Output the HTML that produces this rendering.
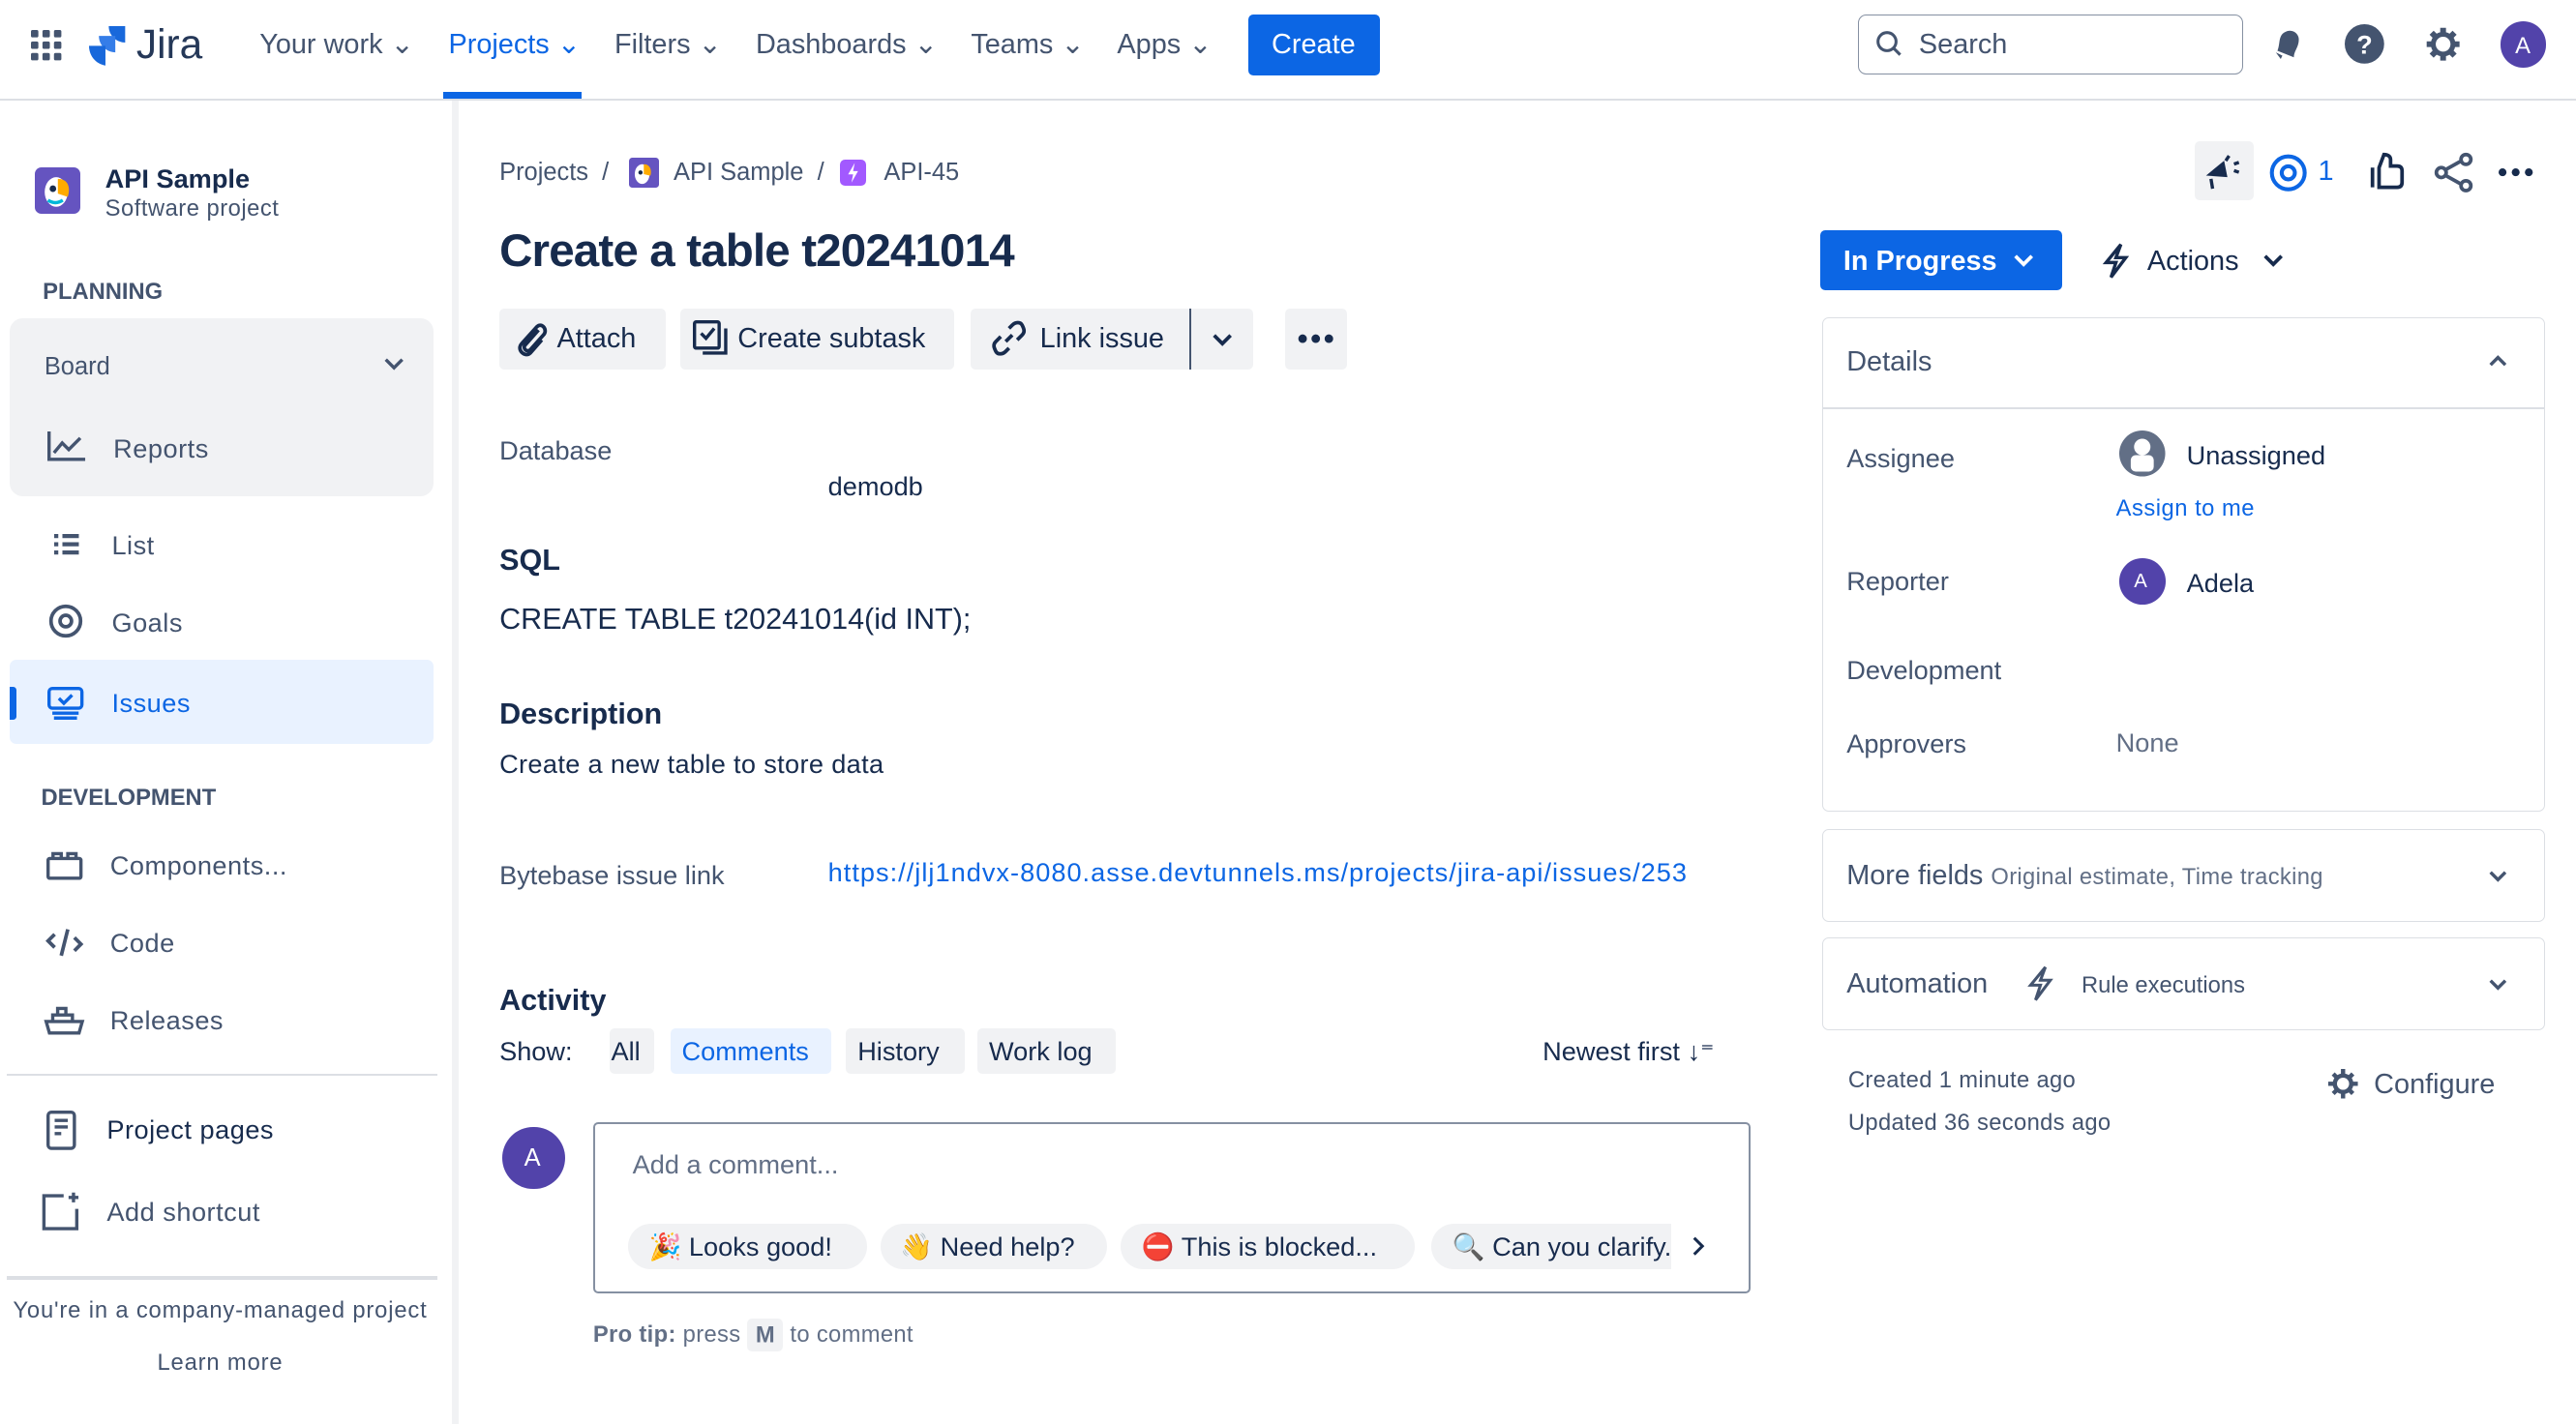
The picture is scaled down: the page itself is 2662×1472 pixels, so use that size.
<!DOCTYPE html>
<html><head><meta charset="utf-8">
<style>
html,body{margin:0;padding:0;background:#fff;overflow:hidden}
body{width:2662px;height:1472px}
#s{position:absolute;left:0;top:0;width:1568px;height:867px;zoom:1.69770;font-family:"Liberation Sans",sans-serif;color:#172b4d}
.t{position:absolute;white-space:nowrap;line-height:1}
.g{color:#44546f}
.b{font-weight:bold}
.box{position:absolute}
svg{position:absolute;overflow:visible}
.btn{position:absolute;background:#f1f2f4;border-radius:3px}
.pill{position:absolute;background:#f1f2f4;border-radius:14px}
</style></head><body><div id="s">
<!-- top nav -->
<div class="box" style="left:0;top:60px;width:1568px;height:1px;background:#dcdfe4"></div>
<svg style="left:19px;top:18px" width="19" height="19" fill="#44546f"><rect x="0" y="0" width="4.5" height="4.5" rx="1"/><rect x="7" y="0" width="4.5" height="4.5" rx="1"/><rect x="14" y="0" width="4.5" height="4.5" rx="1"/><rect x="0" y="7" width="4.5" height="4.5" rx="1"/><rect x="7" y="7" width="4.5" height="4.5" rx="1"/><rect x="14" y="7" width="4.5" height="4.5" rx="1"/><rect x="0" y="14" width="4.5" height="4.5" rx="1"/><rect x="7" y="14" width="4.5" height="4.5" rx="1"/><rect x="14" y="14" width="4.5" height="4.5" rx="1"/></svg>
<svg style="left:54px;top:16px" width="24" height="24"><path d="M12 0h10v10c-5 0-10-4-10-10z" fill="#1868db"/><path d="M6 6h10v10C11 16 6 12 6 6z" fill="#357de8"/><path d="M0 12h10v12C4 23 0 18 0 12z" fill="#1868db"/></svg>
<div class="t" style="left:83px;top:15px;font-size:25px;color:#253858">Jira</div>
<div class="t g" style="left:158px;top:19px;font-size:17px">Your work ⌄</div>
<div class="t" style="left:273px;top:19px;font-size:17px;color:#0c66e4">Projects ⌄</div>
<div class="box" style="left:270px;top:56px;width:84px;height:4px;background:#0c66e4"></div>
<div class="t g" style="left:374px;top:19px;font-size:17px">Filters ⌄</div>
<div class="t g" style="left:460px;top:19px;font-size:17px">Dashboards ⌄</div>
<div class="t g" style="left:591px;top:19px;font-size:17px">Teams ⌄</div>
<div class="t g" style="left:680px;top:19px;font-size:17px">Apps ⌄</div>
<div class="box" style="left:760px;top:9px;width:80px;height:37px;background:#0c66e4;border-radius:3px"></div>
<div class="t" style="left:774px;top:19px;font-size:17px;color:#fff">Create</div>
<div class="box" style="left:1131px;top:9px;width:233px;height:35px;border:1px solid #8590a2;border-radius:5px"></div>
<svg style="left:1142px;top:19px" width="16" height="16" fill="none" stroke="#44546f" stroke-width="1.8"><circle cx="6.5" cy="6.5" r="5.5"/><path d="M10.5 10.5l4 4"/></svg>
<div class="t g" style="left:1168px;top:19px;font-size:17px">Search</div>
<svg style="left:1381px;top:16px" width="22" height="22" fill="#44546f"><path d="M5 15C7 10 5 5 11 3c4-1 7 2 7 5 0 5-3 7-3 11z"/><path d="M4 16l3 4 1-2z"/></svg>
<svg style="left:1427px;top:15px" width="24" height="24"><circle cx="12" cy="12" r="12" fill="#44546f"/><text x="12" y="18" text-anchor="middle" font-size="16" font-weight="bold" fill="#fff" font-family="Liberation Sans">?</text></svg>
<svg style="left:1476px;top:16px" width="22" height="22" fill="none" stroke="#44546f" stroke-width="3"><circle cx="11" cy="11" r="6"/><path d="M11 1v4M11 17v4M1 11h4M17 11h4M4 4l3 3M15 15l3 3M4 18l3-3M15 7l3-3" stroke-width="3.5"/></svg>
<div class="box" style="left:1522px;top:13px;width:28px;height:28px;border-radius:50%;background:#5243aa"></div>
<div class="t" style="left:1531px;top:21px;font-size:14px;color:#fff">A</div>

<!-- sidebar -->
<div class="box" style="left:275px;top:61px;width:4px;height:806px;background:#f1f2f4"></div>
<div class="box" style="left:21px;top:102px;width:28px;height:28px;border-radius:4px;background:#6554c0"></div>
<svg style="left:21px;top:102px" width="28" height="28"><ellipse cx="13" cy="15" rx="7" ry="9" fill="#fff"/><path d="M14 7c6 0 8 5 6 11l-6-2z" fill="#ffab00"/><circle cx="11" cy="13" r="2" fill="#172b4d"/><path d="M8 20c3 2 6 2 9 0" stroke="#00b8d9" stroke-width="2" fill="none"/></svg>
<div class="t b" style="left:64px;top:101px;font-size:16px">API Sample</div>
<div class="t g" style="left:64px;top:120px;font-size:14px;letter-spacing:0.3px">Software project</div>
<div class="t b g" style="left:26px;top:171px;font-size:14px">PLANNING</div>
<div class="box" style="left:6px;top:194px;width:258px;height:108px;background:#f1f2f4;border-radius:8px"></div>
<div class="t g" style="left:27px;top:216px;font-size:15px">Board</div>
<svg style="left:234px;top:218px" width="12" height="8" fill="none" stroke="#44546f" stroke-width="2"><path d="M1 1l5 5 5-5"/></svg>
<svg style="left:29px;top:263px" width="24" height="18" fill="none" stroke="#44546f" stroke-width="2"><path d="M1 0v17h22"/><path d="M4 13l5-6 4 4 7-7"/></svg>
<div class="t g" style="left:69px;top:265px;font-size:16px;letter-spacing:0.3px">Reports</div>
<svg style="left:33px;top:325px" width="15" height="12" fill="#44546f"><rect x="0" y="0" width="2.5" height="2.5"/><rect x="5" y="0" width="10" height="2.5"/><rect x="0" y="5" width="2.5" height="2.5"/><rect x="5" y="5" width="10" height="2.5"/><rect x="0" y="10" width="2.5" height="2.5"/><rect x="5" y="10" width="10" height="2.5"/></svg>
<div class="t g" style="left:68px;top:324px;font-size:16px;letter-spacing:0.3px">List</div>
<svg style="left:30px;top:368px" width="20" height="20" fill="none" stroke="#44546f" stroke-width="2.2"><circle cx="10" cy="10" r="9"/><circle cx="10" cy="10" r="3.5"/></svg>
<div class="t g" style="left:68px;top:371px;font-size:16px;letter-spacing:0.3px">Goals</div>
<div class="box" style="left:6px;top:402px;width:258px;height:51px;background:#e9f2ff;border-radius:4px"></div>
<div class="box" style="left:6px;top:418px;width:4px;height:20px;background:#0c66e4;border-radius:0 2px 2px 0"></div>
<svg style="left:29px;top:418px" width="22" height="20" fill="none" stroke="#0c66e4" stroke-width="2"><rect x="1" y="1" width="20" height="12" rx="2"/><path d="M7 7l3 3 5-5M3 16h16M4 19h14"/></svg>
<div class="t" style="left:68px;top:420px;font-size:16px;color:#0c66e4;letter-spacing:0.3px">Issues</div>
<div class="t b g" style="left:25px;top:479px;font-size:14px">DEVELOPMENT</div>
<svg style="left:28px;top:518px" width="22" height="18" fill="none" stroke="#44546f" stroke-width="2"><rect x="1" y="5" width="20" height="12" rx="1"/><path d="M4 5V2h5v3M13 5V2h5v3"/></svg>
<div class="t g" style="left:67px;top:519px;font-size:16px;letter-spacing:0.3px">Components...</div>
<svg style="left:28px;top:565px" width="22" height="18" fill="none" stroke="#44546f" stroke-width="2.2"><path d="M5 4L1 8l4 4M17 6l4 4-4 4M13 1L9 17"/></svg>
<div class="t g" style="left:67px;top:566px;font-size:16px;letter-spacing:0.3px">Code</div>
<svg style="left:27px;top:612px" width="24" height="18" fill="none" stroke="#44546f" stroke-width="2"><path d="M1 10h22l-2 7H3zM5 10V6h12v4M8 6V2h5v4"/></svg>
<div class="t g" style="left:67px;top:613px;font-size:16px;letter-spacing:0.3px">Releases</div>
<div class="box" style="left:4px;top:654px;width:262px;height:1px;background:#dcdfe4"></div>
<svg style="left:28px;top:676px" width="18" height="24" fill="none" stroke="#44546f" stroke-width="2"><rect x="1" y="1" width="16" height="22" rx="2"/><path d="M5 6h8M5 10h8M5 14h4"/></svg>
<div class="t" style="left:65px;top:680px;font-size:16px;letter-spacing:0.3px">Project pages</div>
<svg style="left:25px;top:725px" width="24" height="24" fill="none" stroke="#44546f" stroke-width="2"><path d="M14 3H2v20h20V11"/><path d="M20 1v6M17 4h6"/></svg>
<div class="t g" style="left:65px;top:730px;font-size:16px;letter-spacing:0.3px">Add shortcut</div>
<div class="box" style="left:4px;top:777px;width:262px;height:2px;background:#dcdfe4"></div>
<div class="t g" style="left:0;width:268px;text-align:center;top:791px;font-size:14px;letter-spacing:0.5px">You're in a company-managed project</div>
<div class="t g" style="left:0;width:268px;text-align:center;top:823px;font-size:14px;letter-spacing:0.5px">Learn more</div>

<!-- main -->
<div class="t g" style="left:304px;top:98px;font-size:15px">Projects &nbsp;/</div>
<div class="box" style="left:383px;top:96px;width:18px;height:18px;border-radius:2px;background:#6554c0"></div>
<svg style="left:383px;top:96px" width="18" height="18"><ellipse cx="8" cy="10" rx="4.5" ry="6" fill="#fff"/><path d="M9 4c4 0 5 4 4 7l-4-1z" fill="#ffab00"/><circle cx="7" cy="9" r="1.3" fill="#172b4d"/></svg>
<div class="t g" style="left:410px;top:98px;font-size:15px">API Sample &nbsp;/</div>
<div class="box" style="left:511px;top:97px;width:16px;height:16px;border-radius:3px;background:#a259ff"></div>
<svg style="left:511px;top:97px" width="16" height="16"><path d="M9 2L5 9h3l-1 5 4-7H8z" fill="#fff"/></svg>
<div class="t g" style="left:538px;top:98px;font-size:15px">API-45</div>
<div class="t" style="left:304px;top:139px;font-size:28px;font-weight:bold;letter-spacing:-0.5px">Create a table t20241014</div>

<div class="btn" style="left:304px;top:188px;width:101px;height:37px"></div>
<svg style="left:313px;top:195px" width="20" height="22" fill="none" stroke="#172b4d" stroke-width="2.2"><path d="M15 6l-8 9c-2 2 1 5 3 3l8-9c3-3-1-8-4-5l-9 10c-4 4 2 9 5 6l7-8"/></svg>
<div class="t" style="left:339px;top:198px;font-size:17px">Attach</div>
<div class="btn" style="left:414px;top:188px;width:167px;height:37px"></div>
<svg style="left:422px;top:195px" width="22" height="22" fill="none" stroke="#172b4d" stroke-width="2"><rect x="1" y="1" width="15" height="16" rx="1"/><path d="M5 8l3 3 5-6M20 5v15H6"/></svg>
<div class="t" style="left:449px;top:198px;font-size:17px">Create subtask</div>
<div class="btn" style="left:591px;top:188px;width:172px;height:37px"></div>
<div class="box" style="left:724px;top:188px;width:1px;height:37px;background:#44546f"></div>
<svg style="left:603px;top:195px" width="22" height="22" fill="none" stroke="#172b4d" stroke-width="2.2"><path d="M9 13l4-4M11 5l2-2c2-2 5-2 6 0s2 4 0 6l-3 3M11 17l-2 2c-2 2-5 2-6 0s-2-4 0-6l3-3"/></svg>
<div class="t" style="left:633px;top:198px;font-size:17px">Link issue</div>
<svg style="left:738px;top:203px" width="12" height="8" fill="none" stroke="#172b4d" stroke-width="2.2"><path d="M1 1l5 5 5-5"/></svg>
<div class="btn" style="left:782px;top:188px;width:38px;height:37px"></div>
<svg style="left:790px;top:203px" width="22" height="6" fill="#172b4d"><circle cx="3" cy="3" r="2.6"/><circle cx="11" cy="3" r="2.6"/><circle cx="19" cy="3" r="2.6"/></svg>

<div class="t g" style="left:304px;top:266px;font-size:16px">Database</div>
<div class="t" style="left:504px;top:288px;font-size:16px">demodb</div>
<div class="t b" style="left:304px;top:332px;font-size:18px">SQL</div>
<div class="t" style="left:304px;top:368px;font-size:18px">CREATE TABLE t20241014(id INT);</div>
<div class="t b" style="left:304px;top:426px;font-size:18px">Description</div>
<div class="t" style="left:304px;top:457px;font-size:16px;letter-spacing:0.2px">Create a new table to store data</div>
<div class="t g" style="left:304px;top:525px;font-size:16px">Bytebase issue link</div>
<div class="t" style="left:504px;top:523px;font-size:16px;color:#0c66e4;letter-spacing:0.6px">https://jlj1ndvx-8080.asse.devtunnels.ms/projects/jira-api/issues/253</div>

<div class="t b" style="left:304px;top:600px;font-size:18px">Activity</div>
<div class="t" style="left:304px;top:632px;font-size:16px">Show:</div>
<div class="btn" style="left:371px;top:626px;width:27px;height:28px"></div>
<div class="t" style="left:372px;top:632px;font-size:16px">All</div>
<div class="btn" style="left:408px;top:626px;width:98px;height:28px;background:#e9f2ff"></div>
<div class="t" style="left:415px;top:632px;font-size:16px;color:#0c66e4">Comments</div>
<div class="btn" style="left:515px;top:626px;width:72px;height:28px"></div>
<div class="t" style="left:522px;top:632px;font-size:16px">History</div>
<div class="btn" style="left:595px;top:626px;width:84px;height:28px"></div>
<div class="t" style="left:602px;top:632px;font-size:16px">Work log</div>
<div class="t" style="left:939px;top:632px;font-size:16px">Newest first ↓⁼</div>

<div class="box" style="left:306px;top:686px;width:38px;height:38px;border-radius:50%;background:#5243aa"></div>
<div class="t" style="left:319px;top:698px;font-size:15px;color:#fff">A</div>
<div class="box" style="left:361px;top:683px;width:702px;height:102px;border:1.5px solid #8590a2;border-radius:3px"></div>
<div class="t" style="left:385px;top:701px;font-size:16px;color:#626f86">Add a comment...</div>
<div class="pill" style="left:382px;top:745px;width:146px;height:28px"></div>
<div class="t" style="left:395px;top:751px;font-size:16px">🎉 Looks good!</div>
<div class="pill" style="left:536px;top:745px;width:138px;height:28px"></div>
<div class="t" style="left:548px;top:751px;font-size:16px">👋 Need help?</div>
<div class="pill" style="left:682px;top:745px;width:179px;height:28px"></div>
<div class="t" style="left:695px;top:751px;font-size:16px">⛔ This is blocked...</div>
<div style="position:absolute;left:871px;top:745px;width:146px;height:28px;overflow:hidden"><div class="pill" style="left:0;top:0;width:170px;height:28px"></div><div class="t" style="left:13px;top:6px;font-size:16px">🔍 Can you clarify...</div></div>
<svg style="left:1030px;top:753px" width="8" height="12" fill="none" stroke="#172b4d" stroke-width="1.8"><path d="M1 1l5 5-5 5"/></svg>
<div class="t" style="left:361px;top:806px;font-size:14px;color:#626f86;letter-spacing:0.2px"><b>Pro tip:</b> press <span style="background:#f1f2f4;padding:2px 5px;border-radius:3px;font-weight:bold">M</span> to comment</div>

<!-- right column -->
<div class="btn" style="left:1336px;top:86px;width:36px;height:36px"></div>
<svg style="left:1342px;top:92px" width="24" height="24" fill="#172b4d"><path d="M1 15L12 6l2 10z"/><path d="M4 17l1 6" stroke="#172b4d" stroke-width="2"/><path d="M15 3l-2 3M18 8l3-1M18 12l3 1" stroke="#172b4d" stroke-width="2" fill="none"/></svg>
<svg style="left:1382px;top:94px" width="24" height="22" fill="none" stroke="#0c66e4" stroke-width="2.4"><ellipse cx="11" cy="11" rx="10" ry="10"/><circle cx="11" cy="11" r="4"/></svg>
<div class="t" style="left:1411px;top:96px;font-size:17px;color:#0c66e4">1</div>
<svg style="left:1443px;top:93px" width="22" height="22" fill="none" stroke="#172b4d" stroke-width="2.2"><path d="M1 9v12M5 21h11c2 0 3-1 3-3V11c0-2-1-3-3-3h-4V4c0-2-2-3-4-3L5 9z"/></svg>
<svg style="left:1482px;top:93px" width="24" height="24" fill="none" stroke="#44546f" stroke-width="2.2"><circle cx="19" cy="4" r="3"/><circle cx="4" cy="12" r="3"/><circle cx="19" cy="20" r="3"/><path d="M7 10l9-5M7 14l9 5"/></svg>
<svg style="left:1520px;top:102px" width="22" height="6" fill="#172b4d"><circle cx="3" cy="3" r="2.4"/><circle cx="11" cy="3" r="2.4"/><circle cx="19" cy="3" r="2.4"/></svg>

<div class="box" style="left:1108px;top:140px;width:147px;height:37px;background:#0c66e4;border-radius:3px"></div>
<div class="t b" style="left:1122px;top:151px;font-size:17px;color:#fff">In Progress</div>
<svg style="left:1226px;top:155px" width="12" height="8" fill="none" stroke="#fff" stroke-width="2.2"><path d="M1 1l5 5 5-5"/></svg>
<svg style="left:1280px;top:148px" width="16" height="22" fill="none" stroke="#172b4d" stroke-width="2"><path d="M11 1L2 12h6l-3 9 9-12H8z"/></svg>
<div class="t" style="left:1307px;top:151px;font-size:17px">Actions</div>
<svg style="left:1378px;top:155px" width="12" height="8" fill="none" stroke="#172b4d" stroke-width="2.2"><path d="M1 1l5 5 5-5"/></svg>

<div class="box" style="left:1109px;top:193px;width:439px;height:300px;border:1px solid #dcdfe4;border-radius:4px"></div>
<div class="box" style="left:1110px;top:248px;width:439px;height:1px;background:#dcdfe4"></div>
<div class="t g" style="left:1124px;top:212px;font-size:17px">Details</div>
<svg style="left:1515px;top:216px" width="11" height="7" fill="none" stroke="#44546f" stroke-width="2"><path d="M1 6l4.5-4.5L10 6"/></svg>
<div class="t g" style="left:1124px;top:271px;font-size:16px">Assignee</div>
<svg style="left:1290px;top:262px" width="28" height="28"><circle cx="14" cy="14" r="14" fill="#626f86"/><circle cx="14" cy="10" r="5" fill="#fff"/><rect x="7" y="15" width="14" height="10" rx="3" fill="#fff"/></svg>
<div class="t" style="left:1331px;top:269px;font-size:16px">Unassigned</div>
<div class="t" style="left:1288px;top:303px;font-size:14px;color:#0c66e4;letter-spacing:0.3px">Assign to me</div>
<div class="t g" style="left:1124px;top:346px;font-size:16px">Reporter</div>
<div class="box" style="left:1290px;top:340px;width:28px;height:28px;border-radius:50%;background:#5243aa"></div>
<div class="t" style="left:1299px;top:348px;font-size:12px;color:#fff">A</div>
<div class="t" style="left:1331px;top:347px;font-size:16px">Adela</div>
<div class="t g" style="left:1124px;top:400px;font-size:16px">Development</div>
<div class="t g" style="left:1124px;top:445px;font-size:16px">Approvers</div>
<div class="t" style="left:1288px;top:444px;font-size:16px;color:#626f86">None</div>

<div class="box" style="left:1109px;top:505px;width:439px;height:55px;border:1px solid #dcdfe4;border-radius:4px"></div>
<div class="t g" style="left:1124px;top:525px;font-size:17px">More fields <span style="font-size:14px;color:#626f86;letter-spacing:0.2px">Original estimate, Time tracking</span></div>
<svg style="left:1515px;top:530px" width="11" height="7" fill="none" stroke="#44546f" stroke-width="2"><path d="M1 1l4.5 4.5L10 1"/></svg>
<div class="box" style="left:1109px;top:571px;width:439px;height:55px;border:1px solid #dcdfe4;border-radius:4px"></div>
<div class="t g" style="left:1124px;top:591px;font-size:17px">Automation</div>
<svg style="left:1234px;top:588px" width="16" height="23" fill="none" stroke="#44546f" stroke-width="1.8"><path d="M11 1L2 12h6l-3 9 9-12H8z"/></svg>
<div class="t g" style="left:1267px;top:593px;font-size:14px">Rule executions</div>
<svg style="left:1515px;top:596px" width="11" height="7" fill="none" stroke="#44546f" stroke-width="2"><path d="M1 1l4.5 4.5L10 1"/></svg>
<div class="t g" style="left:1125px;top:651px;font-size:14px;letter-spacing:0.2px">Created 1 minute ago</div>
<div class="t g" style="left:1125px;top:677px;font-size:14px;letter-spacing:0.2px">Updated 36 seconds ago</div>
<svg style="left:1417px;top:651px" width="18" height="18" fill="none" stroke="#44546f" stroke-width="2.6"><circle cx="9" cy="9" r="5"/><path d="M9 0v3M9 15v3M0 9h3M15 9h3M3 3l2 2M13 13l2 2M3 15l2-2M13 5l2-2"/></svg>
<div class="t g" style="left:1445px;top:652px;font-size:17px">Configure</div>
</div></body></html>
